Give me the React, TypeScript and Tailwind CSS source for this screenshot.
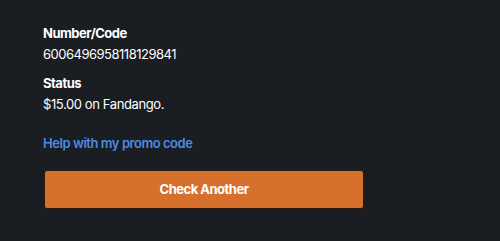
import React from 'react';

const App: React.FC = () => {
  return (
    <div className="min-h-[241px] w-full bg-[#1a1d21] font-['Inter',sans-serif] text-white">
      <div className="w-[320px] pl-[43px] pt-[25px] box-content">
        <div className="text-[13px] font-bold leading-[16px] tracking-[-0.5px]">Number/Code</div>
        <div className="mt-[4px] text-[13px] leading-[18px] tracking-[-0.5px]">6006496958118129841</div>
        <div className="mt-[12px] text-[13px] font-bold leading-[16px] tracking-[-0.5px]">Status</div>
        <div className="mt-[4px] text-[13px] leading-[18px] tracking-[-0.4px]">$15.00 on Fandango.</div>
        <a className="mt-[22px] block text-[13px] font-semibold leading-[16px] tracking-[-0.45px] text-[#4b8ce0]">
          Help with my promo code
        </a>
        <button className="mt-[19px] ml-px flex h-[39px] w-[320px] items-center justify-center rounded-[3px] border border-[#2a1a10] bg-[#d6702c] text-[13px] font-bold tracking-[-0.5px] text-white">
          Check Another
        </button>
      </div>
    </div>
  );
};

export default App;
